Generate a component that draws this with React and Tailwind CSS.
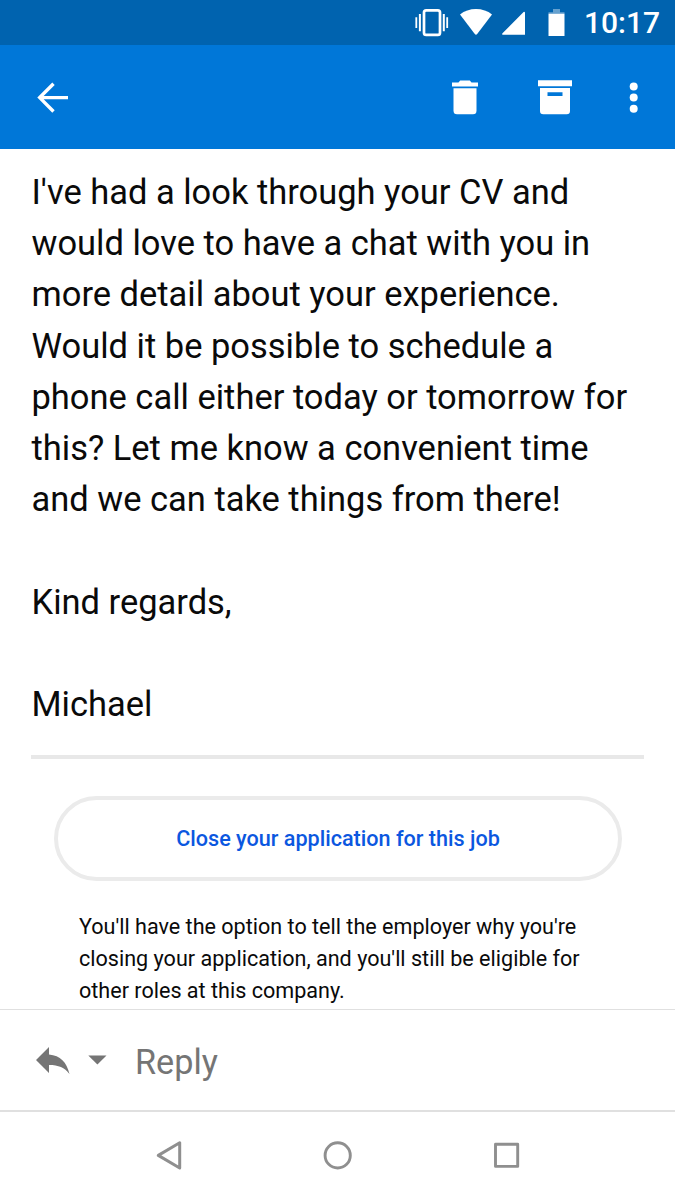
import React from "react";

function StatusBar() {
  return (
    <div className="flex h-[45px] shrink-0 items-center justify-end bg-[#0063af] pr-[16px] text-white">
      <svg className="mr-[11px] h-[45px] w-[34px]" viewBox="0 0 34 45" fill="none" stroke="currentColor">
        <rect x="9" y="10.3" width="16" height="24.6" rx="2.2" strokeWidth="2.7" />
        <path d="M1.3 17.2v10.8M32.2 17.2v10.8" strokeWidth="1.8" />
        <path d="M4.9 14v17.3M28.8 14v17.3" strokeWidth="2" />
      </svg>
      <svg className="mr-[10px] h-[45px] w-[32px]" viewBox="0 0 32 45" fill="currentColor">
        <path d="M0 14.6C4.3 11 10 9.1 16 9.1s11.7 1.9 16 5.5L17.2 34q-1.2 1.3-2.4 0Z" />
      </svg>
      <svg className="mr-[23px] h-[45px] w-[23px]" viewBox="0 0 23 45" fill="currentColor">
        <path d="M23 12.6V34.7H.8q-1.3-.5-.3-1.5L21.6 12q1-.6 1.4.6Z" />
      </svg>
      <svg className="mr-[19px] h-[45px] w-[17px]" viewBox="0 0 17 45" fill="currentColor">
        <path d="M5 9h7v3.2h4.5v1.5H.5v-1.5H5Z" opacity=".4" />
        <path d="M.5 13.7h16V36H.5Z" />
      </svg>
      <span className="w-[75px] text-[30px] font-medium leading-[46px] whitespace-nowrap">10:17</span>
    </div>
  );
}

function Toolbar() {
  return (
    <header className="flex h-[104px] shrink-0 items-center bg-[#0077d8] pl-[37px] pr-[37px] text-white">
      <svg className="mr-auto h-[32px] w-[32px]" viewBox="0 0 32 32" fill="none" stroke="currentColor" strokeWidth="3.4">
        <path d="M31 16.6H3M16.5 2.7L2.7 16.6l13.8 13.9" />
      </svg>
      <svg className="mr-[60px] h-[36px] w-[26px]" viewBox="0 0 26 36" fill="currentColor">
        <path d="M0 3.5h6.5L8.2 1.5h9.6l1.7 2H26v3.9H0Z" />
        <path d="M1.5 9.2h23v22.5q0 3.5-3.5 3.5H5q-3.5 0-3.5-3.5Z" />
      </svg>
      <svg className="mr-[57px] h-[36px] w-[34px]" viewBox="0 0 34 36" fill="currentColor">
        <path d="M0 1.3h34v6H0Z" />
        <path fillRule="evenodd" d="M2 9h30v22.9q0 3.3-3.3 3.3H5.3Q2 35.2 2 31.9ZM9.5 13.2v3.8h15v-3.8Z" />
      </svg>
      <svg className="h-[36px] w-[9px]" viewBox="0 0 9 36" fill="currentColor">
        <circle cx="4.7" cy="7.5" r="4" />
        <circle cx="4.7" cy="18.6" r="4" />
        <circle cx="4.7" cy="29.8" r="4" />
      </svg>
    </header>
  );
}

const message = [
  "I've had a look through your CV and",
  "would love to have a chat with you in",
  "more detail about your experience.",
  "Would it be possible to schedule a",
  "phone call either today or tomorrow for",
  "this? Let me know a convenient time",
  "and we can take things from there!",
];

const hint = [
  "You'll have the option to tell the employer why you're",
  "closing your application, and you'll still be eligible for",
  "other roles at this company.",
];

export default function App() {
  return (
    <div className="flex h-[1200px] w-[675px] flex-col overflow-hidden bg-white font-['Roboto',sans-serif] text-[#0a0a0a]">
      <StatusBar />
      <Toolbar />

      {/* Message */}
      <main className="h-[860px] shrink-0 overflow-hidden px-[31px] pt-[18px]">
        <div className="h-[588px] pl-[0.5px] text-[34.48px] leading-[51.2px] whitespace-nowrap">
          <p>
            {message.map((line) => (
              <span key={line} className="block">{line}</span>
            ))}
          </p>
          <p className="mt-[51.2px]">Kind regards,</p>
          <p className="mt-[51.2px]">Michael</p>
        </div>
        <hr className="h-1 border-0 bg-[#e8e8e8]" />
        <button className="mt-[37px] ml-[23px] block h-[85px] w-[568px] rounded-full border-4 border-[#ebebeb] pt-[1px] text-[21.6px] font-medium text-[#0b57e0]">
          Close your application for this job
        </button>
        <p className="mt-[30px] ml-12 text-[21.57px] leading-8 whitespace-nowrap">
          {hint.map((line) => (
            <span key={line} className="block">{line}</span>
          ))}
        </p>
      </main>

      {/* Reply bar */}
      <div className="flex h-[103px] shrink-0 items-center border-t border-b-2 border-[#e0e0e0] pl-[36px] text-[#757575]">
        <svg className="h-[27px] w-[34px]" viewBox="0 0 34 27" fill="currentColor">
          <path d="M13 0v7.5C24.5 8.7 30.5 15 33.5 27 28.5 20.5 22.5 18 13 18v8L0 13Z" />
        </svg>
        <svg className="ml-[18px] h-[10px] w-[19px]" viewBox="0 0 19 10" fill="currentColor">
          <path d="M.3.5h18.2L9.4 9.5Z" />
        </svg>
        <span className="ml-[28px] pt-[4px] text-[34.2px] leading-[51px]">Reply</span>
      </div>

      {/* System navigation */}
      <nav className="flex flex-1 items-center pl-[156px] text-[#8f8f8f]">
        <svg className="h-[30px] w-[27px]" viewBox="0 0 27 30" fill="none" stroke="currentColor" strokeWidth="3" strokeLinejoin="round">
          <path d="M23.7 1.8v25.2L2.3 14.4Z" />
        </svg>
        <svg className="ml-[140px] h-[30px] w-[30px]" viewBox="0 0 30 30" fill="none" stroke="currentColor" strokeWidth="2.9">
          <circle cx="14.7" cy="14.4" r="12.6" />
        </svg>
        <svg className="ml-[140px] h-[30px] w-[28px]" viewBox="0 0 28 30" fill="none" stroke="currentColor" strokeWidth="2.9" strokeLinejoin="round">
          <rect x="2.5" y="3.2" width="22.2" height="22.2" />
        </svg>
      </nav>
    </div>
  );
}
